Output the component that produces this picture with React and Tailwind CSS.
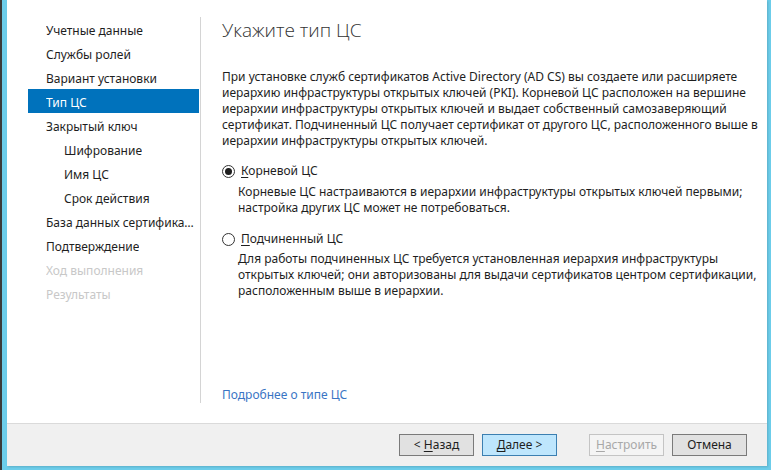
import React from "react";

const font = { fontFamily: '"Noto Sans", "Liberation Sans", sans-serif' };

const navItems = [
  { label: "Учетные данные" },
  { label: "Службы ролей" },
  { label: "Вариант установки" },
  { label: "Тип ЦС", active: true },
  { label: "Закрытый ключ" },
  { label: "Шифрование", indent: true },
  { label: "Имя ЦС", indent: true },
  { label: "Срок действия", indent: true },
  { label: "База данных сертификатов" },
  { label: "Подтверждение" },
  { label: "Ход выполнения", disabled: true },
  { label: "Результаты", disabled: true },
];

const Radio = ({ checked }) => (
  <span className="w-[13px] h-[13px] rounded-full border border-[#333333] bg-white flex items-center justify-center shrink-0">
    {checked && <span className="w-[7px] h-[7px] rounded-full bg-[#1e1e1e]" />}
  </span>
);

const Button = ({ children, variant = "normal", className = "" }) => {
  const styles = {
    normal: "border-[#7a7a7a] bg-[#e1e1e1] text-[#1e1e1e]",
    focus: "border-[#3c7fb1] bg-[#bee6fd] text-[#1e1e1e]",
    disabled: "border-[#c4c4c4] bg-[#f4f4f4] text-[#a8a8a8]",
  };
  return (
    <div
      className={`w-[75px] h-[22px] border flex items-center justify-center text-[12px] leading-none ${styles[variant]} ${className}`}
    >
      {children}
    </div>
  );
};

export default function App() {
  return (
    <div
      className="w-[771px] h-[470px] bg-[#6ccdea] border-l-2 border-[#3a3a3a] pl-[5px] pr-[4px] pb-[4px] flex flex-col"
      style={font}
    >
      <div className="flex-1 flex flex-col shadow-[1px_1px_2px_rgba(0,0,0,0.15)]">
        {/* main white area */}
        <div className="h-[423px] bg-white flex pt-[17px] pb-[20px]">
          <nav className="w-[193px] pl-[21px] pr-px flex flex-col">
            {navItems.map((item) => (
              <div
                key={item.label}
                className={`h-6 pt-[4px] flex items-center text-[12px] pr-[2px] ${
                  item.indent ? "pl-[36px]" : "pl-[18px]"
                } ${
                  item.active
                    ? "bg-[#0072bc] text-white"
                    : item.disabled
                    ? "text-[#c8c8c8]"
                    : "text-[#1e1e1e]"
                }`}
              >
                <span className="truncate">{item.label}</span>
              </div>
            ))}
          </nav>
          <div className="w-px bg-[#d4d4d4]" />
          <div className="flex-1 pl-[21px] flex flex-col text-[12px] text-[#1e1e1e]">
            <h1
              className="h-[26px] leading-[26px] text-[19px] font-light text-[#333333]"
              style={{ fontFamily: '"Open Sans", "Noto Sans", sans-serif' }}
            >
              Укажите тип ЦС
            </h1>
            <div className="mt-[26px] leading-4 whitespace-nowrap">
              <div>При установке служб сертификатов Active Directory (AD CS) вы создаете или расширяете</div>
              <div>иерархию инфраструктуры открытых ключей (PKI). Корневой ЦС расположен на вершине</div>
              <div>иерархии инфраструктуры открытых ключей и выдает собственный самозаверяющий</div>
              <div>сертификат. Подчиненный ЦС получает сертификат от другого ЦС, расположенного выше в</div>
              <div>иерархии инфраструктуры открытых ключей.</div>
            </div>

            <div className="mt-[14px] h-4 flex items-center">
              <Radio checked />
              <span className="ml-[6px]">
                <span className="underline underline-offset-2">К</span>орневой ЦС
              </span>
            </div>
            <div className="mt-[5px] ml-[16px] leading-4 whitespace-nowrap">
              <div>Корневые ЦС настраиваются в иерархии инфраструктуры открытых ключей первыми;</div>
              <div>настройка других ЦС может не потребоваться.</div>
            </div>

            <div className="mt-[15px] h-4 flex items-center">
              <Radio />
              <span className="ml-[6px]">
                <span className="underline underline-offset-2">П</span>одчиненный ЦС
              </span>
            </div>
            <div className="mt-[4px] ml-[16px] leading-4 whitespace-nowrap">
              <div>Для работы подчиненных ЦС требуется установленная иерархия инфраструктуры</div>
              <div>открытых ключей; они авторизованы для выдачи сертификатов центром сертификации,</div>
              <div>расположенным выше в иерархии.</div>
            </div>

            <div className="mt-auto leading-4 text-[#3a75c4]">Подробнее о типе ЦС</div>
          </div>
        </div>

        <div className="h-px bg-[#dadada]" />

        {/* footer */}
        <div className="flex-1 bg-[#f0f0f0] flex justify-end items-start pt-[10px] pr-[20px]">
          <Button>
            &lt;&nbsp;<span className="underline underline-offset-2">Н</span>азад
          </Button>
          <Button variant="focus" className="ml-[8px]">
            <span className="underline underline-offset-2">Д</span>алее&nbsp;&gt;
          </Button>
          <Button variant="disabled" className="ml-[32px]">
            <span className="underline underline-offset-2">Н</span>астроить
          </Button>
          <Button className="ml-[8px]">Отмена</Button>
        </div>
      </div>
    </div>
  );
}
